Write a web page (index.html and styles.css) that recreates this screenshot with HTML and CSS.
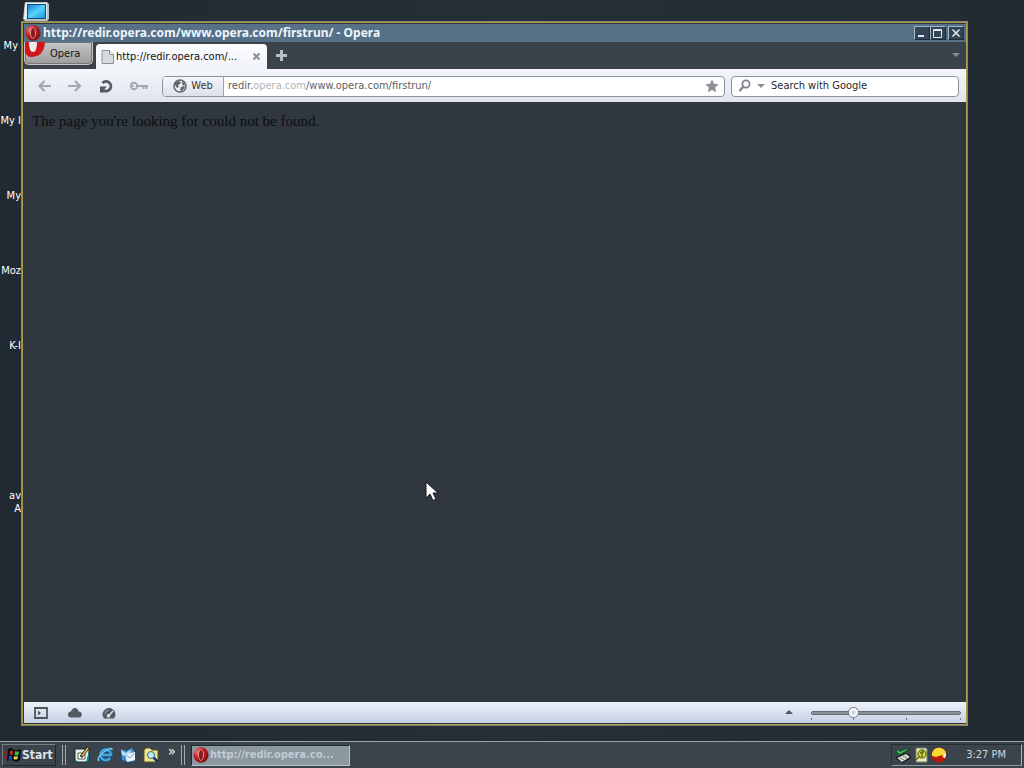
FILE: index.html
```html
<!DOCTYPE html>
<html lang="en">
<head>
<meta charset="utf-8">
<title>Opera</title>
<link rel="stylesheet" href="styles.css">
</head>
<body>
<svg class="defs" aria-hidden="true">
  <defs>
    <radialGradient id="red" cx=".3" cy=".3" r=".8"><stop offset="0" stop-color="#f08078"/><stop offset=".45" stop-color="#c52125"/><stop offset="1" stop-color="#790b10"/></radialGradient>
    <linearGradient id="screen" x2="1" y2="1"><stop offset="0" stop-color="#167dd6"/><stop offset=".5" stop-color="#5ad2fa"/><stop offset="1" stop-color="#1595e5"/></linearGradient>
    <symbol id="opera" viewBox="0 0 16 16"><ellipse cx="8" cy="8" rx="7.5" ry="7.8" fill="url(#red)"/><ellipse cx="8" cy="8" rx="2.8" ry="5.8" fill="#d8b4b2"/><ellipse cx="8" cy="8" rx="2" ry="5" fill="#8c171a"/></symbol>
  </defs>
</svg>
<main class="desktop">
  <svg class="computer" width="26" height="20" viewBox="0 0 26 20"><path d="M2 1h22l2 2v15l-2 2H2l-2-2z" fill="#b9c0c5"/><path d="M2 2h22v16H1z" fill="#e8ecee"/><path d="M4 3h19v15H4z" fill="#0d4c82"/><path d="M5 4h17v13H5z" fill="url(#screen)"/></svg>
  <ul class="shortcuts">
    <li class="early">My</li>
    <li>My I</li>
    <li>My</li>
    <li>Moz</li>
    <li>K-I</li>
    <li></li>
    <li>av<br>A</li>
  </ul>
  <section class="window">
    <header class="titlebar">
      <svg width="16" height="16"><use href="#opera"/></svg>
      <h1>http://redir.opera.com/www.opera.com/firstrun/ - Opera</h1>
      <div class="controls">
        <button class="wm" aria-label="Minimize"><svg width="14" height="12"><path d="M3 9h6" stroke="#dce7f2" stroke-width="2"/></svg></button>
        <button class="wm" aria-label="Maximize"><svg width="14" height="12"><path d="M2.500 2.500h8v8h-8zM2 3.500h9" fill="none" stroke="#dce7f2"/></svg></button>
        <button class="wm close" aria-label="Close"><svg width="14" height="12"><path d="M3.500 2.500l7 7m0-7l-7 7" stroke="#dce7f2" stroke-width="1.600"/></svg></button>
      </div>
    </header>
    <nav class="tabs">
      <button class="menu"><svg width="21" height="16" viewBox="0 0 21 16"><path d="M0 0h20Q19 15 6 15Q2 15 0 10z" fill="#cf161c"/><path d="M4 0h8q0 10-4 10T4 0z" fill="#eeeaea"/></svg><span>Opera</span></button>
      <div class="tab">
        <svg width="13" height="14" viewBox="0 0 13 14"><path d="M1 .5h7.500l4 4v9H1z" fill="#d7dae0" stroke="#8c9097"/><path d="M8.500 .5v4h4" fill="#f7f7f8" stroke="#8c9097"/></svg>
        <span>http://redir.opera.com/...</span>
        <button class="plain" aria-label="Close tab"><svg width="9" height="9"><path d="M1.500 1.500l6 6m0-6l-6 6" stroke="#8a8e96" stroke-width="2"/></svg></button>
      </div>
      <button class="plain" aria-label="New tab"><svg width="13" height="13"><path d="M6.500 1v11M1 6.500h11" stroke="#b9bec3" stroke-width="3"/></svg></button>
      <button class="plain more" aria-label="Closed tabs"><svg width="8" height="5"><path d="M0 0h8L4 4z" fill="#858c94"/></svg></button>
    </nav>
    <div class="toolbar">
      <div class="actions">
        <button class="plain" aria-label="Back"><svg width="16" height="14"><path d="M14 7H3M7.500 2l-5 5 5 5" fill="none" stroke="#a3a7ae" stroke-width="2.200"/></svg></button>
        <button class="plain" aria-label="Forward"><svg width="16" height="14"><path d="M1 7h11M8 2l5 5-5 5" fill="none" stroke="#a3a7ae" stroke-width="2.200"/></svg></button>
        <button class="plain" aria-label="Reload"><svg width="18" height="14"><path d="M5.500 4A4.800 4.800 0 1 1 7 11.500" fill="none" stroke="#555a61" stroke-width="2.800"/><path d="M3 7.500h7L7.500 10v3.500H3z" fill="#555a61"/></svg></button>
        <button class="plain" aria-label="Passwords"><svg width="20" height="12"><circle cx="5" cy="6" r="3.200" fill="none" stroke="#a3a7ae" stroke-width="2"/><circle cx="4" cy="6" r="1" fill="#a3a7ae"/><path d="M8 6h11M14.500 6v3M17.500 6v3" stroke="#a3a7ae" stroke-width="2"/></svg></button>
      </div>
      <div class="field address">
        <button class="web"><svg width="14" height="14" viewBox="0 0 14 14"><circle cx="7" cy="7" r="6" fill="#eef0f4" stroke="#62676e" stroke-width="1.600"/><path d="M2 4l3-2 3 1-1 2-2 1 1 2-2 1-2-3zM9 2l3 3-1 2-2-2zM8 8l3-1 1 1-3 4-2-1z" fill="#62676e"/></svg>Web</button>
        <div class="url" role="textbox" aria-label="Address" contenteditable="true" spellcheck="false">redir.<span>opera.com</span>/www.opera.com/firstrun/</div>
        <button class="plain" aria-label="Bookmark"><svg width="14" height="14" viewBox="0 0 14 14"><path d="M7 .5l2 4.300 4.700.5-3.500 3.200 1 4.800L7 10.900l-4.200 2.400 1-4.800L.3 5.300 5 4.800z" fill="#8d9198"/></svg></button>
      </div>
      <div class="field search">
        <button class="plain" aria-label="Search engine"><svg width="27" height="14"><circle cx="8" cy="5" r="3.600" fill="none" stroke="#7f838a" stroke-width="1.800"/><path d="M5.500 7.500L1.500 12" stroke="#7f838a" stroke-width="2.400"/><path d="M19 5h8l-4 4z" fill="#8c9096"/></svg></button>
        <input type="text" aria-label="Search" placeholder="Search with Google">
      </div>
    </div>
    <article class="page">The page you're looking for could not be found.</article>
    <footer class="status">
      <button class="plain" aria-label="Panels"><svg width="14" height="12"><path d="M1 1h12v10H1z" fill="none" stroke="#50555d" stroke-width="1.800"/><path d="M4 3.500v5L7 6z" fill="#50555d"/></svg></button>
      <button class="plain" aria-label="Opera Link"><svg width="14" height="11"><path d="M3 10.500a3 3 0 0 1 0-6Q4 1 7 1t3.500 3.500a3 3 0 0 1 .5 6z" fill="#555a61"/></svg></button>
      <button class="plain" aria-label="Turbo"><svg width="14" height="12"><path d="M2 11.500Q-1 7 2 3.500Q7-2 12 3.500Q15 7 12 11.500z" fill="#555a61"/><path d="M6.500 9L11 4" stroke="#dfe5ef" stroke-width="1.500"/><circle cx="6.500" cy="8.800" r="1.800" fill="#dfe5ef"/><path d="M3 7q0-3.500 4-4" fill="none" stroke="#9ba2ac"/></svg></button>
      <button class="plain zoom-menu" aria-label="Zoom menu"><svg width="8" height="5"><path d="M0 4h8L4 0z" fill="#50555d"/></svg></button>
      <label class="zoom"><input type="range" aria-label="Zoom" min="0" max="100" value="26"><span class="ticks"><i></i><i></i><i></i></span></label>
    </footer>
  </section>
  <svg class="cursor" width="13" height="21" viewBox="0 0 13 21"><path d="M1 1v16l4-4 3 6.500 3-1.300-3-6.200h5z" fill="#fff" stroke="#171b22"/></svg>
</main>
<footer class="taskbar">
  <button class="start"><svg width="17" height="16" viewBox="0 0 17 16"><path d="M0 5h2v2H0zM2 4h2v2H2zM0 10h2v2H0zM2 9h2v2H2z" fill="#8c2025"/><path d="M4 2q4-2 6 1 3 1 7-1l-1 11q-3 3-6 1-3-2-7 0z" fill="#08090b"/><path d="M6 4q2-1 3 0l-.5 4q-2-1-3 0z" fill="#d82c24"/><path d="M11 4q2 1 4 0l-.5 4q-2 1-4 0z" fill="#36bd46"/><path d="M5 9q2-1 3 0l-.5 4q-2-1-3 0z" fill="#254ac7"/><path d="M10 9q2 1 4 0l-.5 3q-2 1-4 0z" fill="#ead43c"/></svg>Start</button>
  <i class="grip"></i>
  <nav class="launch">
    <button class="plain" aria-label="Show desktop"><svg width="16" height="16"><path d="M1 2h14v13H1z" fill="#e9f0e9" stroke="#172b2b"/><path d="M1 12l3 3H1zm14-8v11h-3z" fill="#177e86"/><path d="M4 6h7v6H4z" fill="#fff" stroke="#4c6350"/><path d="M7 10l7-9" stroke="#1c1c10" stroke-width="3"/><path d="M8 9l6-8" stroke="#e7c84d" stroke-width="1.500"/></svg></button>
    <button class="plain" aria-label="Internet Explorer"><svg width="16" height="16"><path d="M13 11a5.300 5.300 0 1 1 1-3H5" fill="none" stroke="#1977bc" stroke-width="3.400"/><path d="M13 11a5.300 5.300 0 1 1 1-3H5" fill="none" stroke="#55b3e4" stroke-width="1.600"/><path d="M2 14Q-1 11 7 5T15 3" fill="none" stroke="#74c9ed" stroke-width="1.500"/></svg></button>
    <button class="plain" aria-label="Outlook Express"><svg width="16" height="16"><path d="M1 2l5 2 6-3 2 3 1 10-6 1-7-2z" fill="#3d91d4"/><path d="M5 7l10-2v8l-8 2z" fill="#e9f3fa"/><path d="M1 3l5 3 4-3 1 2-7 4-2-1z" fill="#b8dcf4"/><path d="M6 8l4 3 4-5" fill="none" stroke="#68a3cc"/></svg></button>
    <button class="plain" aria-label="Search files"><svg width="16" height="16"><path d="M1 3l2-2h4l2 2h6v12H1z" fill="#f0e68a" stroke="#56562a"/><path d="M10 10l5 5" stroke="#163862" stroke-width="2.500"/><circle cx="8" cy="8" r="3.500" fill="#bce9f2" stroke="#356c9d"/></svg></button>
    <button class="plain chevron" aria-label="More">»</button>
  </nav>
  <i class="grip"></i>
  <button class="task"><svg width="16" height="16"><use href="#opera"/></svg><span>http://redir.opera.co...</span></button>
  <div class="tray">
    <svg width="16" height="16"><path d="M1 10l10-4 5 3v2l-8 5-7-4z" fill="#101615"/><path d="M2 11l9-4 4 3-8 5z" fill="#d3d9d4"/><path d="M5 11l4 2m-1-4 4 2" stroke="#778078"/><path d="M1 2l4 3 8-4v3L5 8 1 6z" fill="#0f5420"/><path d="M2 3l3 2 7-3v1L5 7 2 5z" fill="#43c95b"/></svg>
    <svg width="14" height="16"><path d="M2 1h10l1 1v13H2z" fill="#e7ebc5" stroke="#788069"/><circle cx="8" cy="7" r="4" fill="#d4db48" stroke="#777e12" stroke-width="1.500"/><path d="M2 13l4-4M8 4v6m-2-4 4-1" stroke="#676e0c" stroke-width="1.500"/></svg>
    <svg width="16" height="16"><circle cx="8" cy="8" r="7.500" fill="#bf160f"/><path d="M1 6q2-6 9-5 6 2 5 8l-3 2-1-3-3 1-3 1-4-1z" fill="#f6dc31"/><path d="M13 7h2l-1 4h-1z" fill="#fff"/></svg>
    <time>3:27 PM</time>
  </div>
</footer>
</body>
</html>
```
FILE: styles.css
```css
* { box-sizing: border-box; }
body { margin: 0; height: 100vh; display: flex; flex-direction: column; overflow: hidden; background: #222b33; font: 11px/14px "DejaVu Sans Condensed", "DejaVu Sans", sans-serif; color: #fff; }
button, input { font: inherit; color: inherit; margin: 0; padding: 0; border: 0; background: none; }
svg { display: block; flex: none; }
.defs { position: absolute; width: 0; height: 0; }
.desktop { position: relative; flex: 1; min-height: 0; background: linear-gradient(90deg, #212932, #242f36 50%, #222b32); }
.computer { position: absolute; left: 23px; top: 1px; }
.shortcuts { list-style: none; margin: 0; padding: 39px 0 0; width: 21px; }
.shortcuts li { height: 75px; display: flex; justify-content: flex-end; text-align: right; white-space: nowrap; line-height: 13px; overflow: hidden; }
.shortcuts .early { padding-right: 3px; }
.window { position: absolute; inset: 21px 56px 15px 21px; display: flex; flex-direction: column; border: 1px solid #88866f; background: #30363e; box-shadow: inset 0 0 0 1px #a99c4b; padding: 2px 1px 2px 2px; }
.titlebar { display: flex; align-items: center; height: 18px; padding: 0 2px 0 1px; background: #557087; gap: 2px; }
.titlebar h1 { flex: 1; margin: 0; font: bold 12px/16px "Noto Sans", sans-serif; color: #edf5fb; white-space: nowrap; overflow: hidden; }
.controls { display: flex; }
.wm { width: 16px; height: 14px; border: 1px solid #a5b8ca; border-right-color: #1c2b3a; border-bottom-color: #1c2b3a; background: #344455; }
.close { margin-left: 2px; }
.tabs { display: flex; align-items: flex-end; height: 27px; background: #3a424b; }
.menu { align-self: flex-start; display: flex; align-items: flex-start; width: 69px; height: 23px; border: 1px solid #c4c4c4; border-top: 0; border-radius: 0 0 5px 5px; background: linear-gradient(#c5c5c5, #9d9d9d); color: #161616; gap: 4px; box-shadow: inset 0 0 0 1px #777; overflow: hidden; }
.menu span { padding-top: 5px; }
.tab { display: flex; align-items: center; width: 171px; height: 25px; margin-left: 3px; padding: 0 6px 0 5px; border-radius: 4px 4px 0 0; background: linear-gradient(#fdfdfe, #f0f3fa); color: #111; gap: 2px; }
.tab span { flex: 1; white-space: nowrap; }
.plain { display: flex; align-items: center; justify-content: center; }
.tabs > .plain { align-self: center; margin-left: 8px; }
.tabs > .more { margin-left: auto; margin-right: 6px; }
.toolbar { display: flex; align-items: center; height: 33px; padding: 1px 7px 0 13px; gap: 6px; background: linear-gradient(#f4f6fb, #dfe4ee); color: #33373d; }
.actions { display: flex; gap: 14px; width: 119px; align-items: center; }
.field { display: flex; align-items: center; height: 21px; border: 1px solid #8e949e; border-radius: 4px; background: #fff; }
.address { flex: 1; padding-right: 5px; overflow: hidden; }
.web { display: flex; align-items: center; justify-content: center; width: 61px; height: 19px; gap: 4px; border-right: 1px solid #9da3ad; background: linear-gradient(#f5f6fa, #dde1eb); }
.url { flex: 1; padding-left: 4px; color: #5b5f65; white-space: nowrap; outline: 0; }
.url span { color: #b2b5b9; }
.search { width: 228px; padding-left: 6px; gap: 6px; }
.search input { flex: 1; min-width: 0; outline: 0; }
.search input::placeholder { color: #25282d; opacity: 1; }
.page { flex: 1; padding: 9px 8px; background: #30373e; color: #0b0f14; font: 15px/20px "Liberation Serif", serif; }
.status { display: flex; align-items: center; height: 21px; padding: 0 5px 0 10px; gap: 20px; background: linear-gradient(#edf3fb, #c5d0e3); }
.zoom-menu { margin-left: auto; }
.zoom { position: relative; width: 150px; height: 20px; margin-left: -2px; }
.zoom input { appearance: none; display: block; width: 100%; height: 20px; }
.zoom input::-webkit-slider-runnable-track { height: 4px; border-radius: 2px; border: 1px solid #666d77; background: #8b929c; }
.zoom input::-webkit-slider-thumb { appearance: none; width: 11px; height: 11px; margin-top: -5px; border: 1px solid #747b85; border-radius: 50%; background: radial-gradient(#bec6d2, #fff 55%); }
.ticks { position: absolute; inset: auto 0 3px; display: grid; grid-template-columns: 42px 53px 1fr; pointer-events: none; }
.ticks i { width: 100%; height: 2px; border-left: 1px solid #69717e; }
.ticks i:last-child { border-right: 1px solid #69717e; }
.cursor { position: absolute; left: 425px; top: 481px; }
.taskbar { display: flex; align-items: center; height: 27px; padding: 0 2px; border-top: 1px solid #9aa4ac; background: #3b444c; }
.start { display: flex; align-items: center; width: 54px; height: 22px; gap: 1px; padding-left: 1px; border: 1px solid #727c84; border-right-color: #1e262e; border-bottom-color: #1e262e; font-size: 12px; font-weight: bold; color: #dce2e7; }
.grip { width: 4px; height: 20px; margin-left: 6px; border-left: 1px solid #a0a9af; border-right: 1px solid #a0a9af; }
.launch { display: flex; align-items: center; gap: 7px; padding-left: 8px; width: 115px; }
.chevron { height: 22px; align-items: flex-start; font-size: 14px; margin-left: 2px; }
.grip + .task { margin-left: 6px; }
.launch + .grip { margin-left: 0; }
.task { display: flex; align-items: center; width: 159px; height: 21px; padding-left: 1px; gap: 1px; border: 1px solid #202830; border-right-color: #bcc6ce; border-bottom-color: #bcc6ce; background: #8b989f; color: #c1ccd3; font-weight: bold; white-space: nowrap; overflow: hidden; }
.tray { display: flex; align-items: center; height: 22px; width: 131px; margin-left: auto; padding: 0 15px 0 3px; gap: 3px; border: 1px solid #252e36; border-right-color: #a8b2ba; border-bottom-color: #8f9aa2; color: #d0d6db; }
.tray time { margin-left: auto; white-space: nowrap; }
```
